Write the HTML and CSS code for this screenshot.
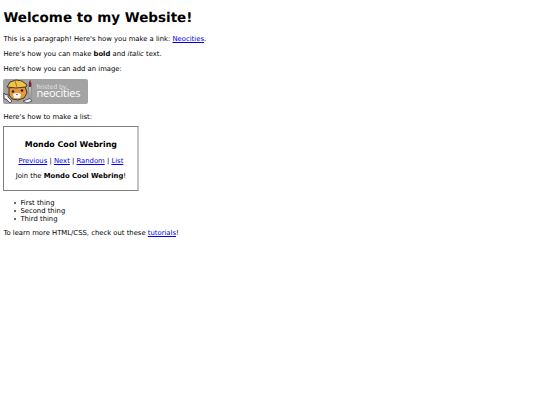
FILE: index.html
```html
<!DOCTYPE html>
<html lang="en">
<head>
  <meta charset="UTF-8">
  <title>My Website</title>
  <link rel="stylesheet" href="styles.css">
</head>
<body>

  <h1>Welcome to my Website!</h1>
  <p>This is a paragraph! Here's how you make a link: <a href="#">Neocities</a>.</p>
  <p>Here's how you can make <strong>bold</strong> and <em>italic</em> text.</p>
  <p class="tight">Here's how you can add an image:</p>

  <div class="badge">
    <svg class="badge-cat" viewBox="0 0 30 25" width="30" height="25">
      <!-- wrench -->
      <path d="M1 14 L3 16 L5 15 L5 18 L9 22 L7 24 L3 20 L1 20 Z" fill="#eee" stroke="#333" stroke-width="0.8"/>
      <!-- head -->
      <path d="M6 9 L22 7 L24 14 L21 19 L15 21 L9 20 L6 16 Z" fill="#e8973a" stroke="#3a2a1a" stroke-width="0.9"/>
      <path d="M10 15 Q14 13 18 15 L17 19 L11 19 Z" fill="#fff"/>
      <circle cx="10" cy="12.5" r="1.3" fill="#222"/>
      <circle cx="19" cy="11.5" r="1.3" fill="#222"/>
      <path d="M13 15 L15 15 L14 16.5 Z" fill="#333"/>
      <!-- helmet -->
      <path d="M4 8 L7 3 L13 1 L19 2 L24 6 L23 8 L13 9 Z" fill="#f1c24a" stroke="#3a2a1a" stroke-width="0.9"/>
      <path d="M12 1.5 L14 8.5" stroke="#a8741f" stroke-width="1"/>
      <!-- paintbrush -->
      <path d="M26 7 L28 7 L27.6 20 L26.4 20 Z" fill="#f2f2f2" stroke="#444" stroke-width="0.5"/>
      <path d="M27 0.5 L28.6 5 L28 8 L26 8 L25.6 5 Z" fill="#7a2430"/>
      <path d="M20 22 L27 19.5 L29 22 L24 24 Z" fill="#f4f4f4" stroke="#333" stroke-width="0.7"/>
    </svg>
    <div class="badge-text">
      <span class="badge-small">hosted by,</span>
      <span class="badge-big">neocities</span>
    </div>
  </div>

  <p class="tight">Here's how to make a list:</p>

  <div class="webring">
    <h3>Mondo Cool Webring</h3>
    <p><a href="#">Previous</a> | <a href="#">Next</a> | <a href="#">Random</a> | <a href="#">List</a></p>
    <p>Join the <strong>Mondo Cool Webring</strong>!</p>
  </div>

  <ul>
    <li>First thing</li>
    <li>Second thing</li>
    <li>Third thing</li>
  </ul>

  <p class="closing">To learn more HTML/CSS, check out these <a href="#">tutorials</a>!</p>

</body>
</html>
```

FILE: styles.css
```css
body {
  margin: 3.375px;
  font-family: "DejaVu Sans", sans-serif;
  font-size: 6.83px;
  line-height: 8px;
  color: #000;
  background-color: #fff;
  text-rendering: geometricPrecision;
}
h1 {
  margin: 7px 0 9px;
  font-size: 13.5px;
  line-height: 16px;
}
p {
  margin: 6.75px 0;
}
p.tight {
  margin-bottom: 0;
}
p.closing {
  margin-top: 6px;
}
a {
  color: #0000ee;
}
.badge {
  display: flex;
  width: 85px;
  height: 25px;
  margin: 5.75px 0 9px;
  background-color: #a3a3a3;
  border-radius: 2px;
  overflow: hidden;
}
.badge-cat {
  flex: none;
}
.badge-text {
  display: flex;
  flex-direction: column;
  padding: 5px 0 0 3px;
  color: #fff;
  font-family: "Open Sans", sans-serif;
}
.badge-small {
  font-size: 6.5px;
  line-height: 6px;
  color: #e4e4e4;
}
.badge-big {
  font-size: 11px;
  line-height: 8px;
  letter-spacing: -0.2px;
}
.webring {
  box-sizing: border-box;
  width: 136px;
  height: 65px;
  margin: 5px 0 0;
  border: 1px solid #808080;
  border-right: 2px solid #c4c4c4;
  text-align: center;
}
.webring h3 {
  margin: 13px 0 8px;
  font-size: 7.9px;
  line-height: 9px;
}
.webring p {
  margin: 7px 0 0;
}
ul {
  margin: 8.5px 0 6px;
  padding-left: 10.5px;
  list-style: none;
}
li::before {
  content: "";
  display: inline-block;
  width: 2px;
  height: 2px;
  margin: 0 4.5px 1px 0;
  border-radius: 50%;
  background-color: #333;
  vertical-align: middle;
}
```
